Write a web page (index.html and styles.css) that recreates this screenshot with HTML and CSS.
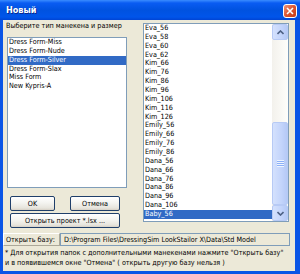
FILE: index.html
```
<!DOCTYPE html>
<html>
<head>
<meta charset="utf-8">
<title>Новый</title>
<link rel="stylesheet" href="styles.css">
</head>
<body>
<div class="window">
	<div class="titlebar">
		<span class="title">Новый</span>
		<span class="close"><svg width="8" height="8" viewBox="0 0 8 8"><path d="M1 1L7 7M7 1L1 7" stroke="#fff" stroke-width="1.6"/></svg></span>
	</div>
	<div class="client">
		<div class="top">
			<div class="left">
				<div class="caption">Выберите тип манекена и размер</div>
				<ul class="list models">
					<li>Dress Form-Miss</li>
					<li>Dress Form-Nude</li>
					<li class="sel">Dress Form-Silver</li>
					<li>Dress Form-Slax</li>
					<li>Miss Form</li>
					<li>New Kypris-A</li>
				</ul>
				<div class="buttons">
					<button class="btn ok">OK</button>
					<button class="btn cancel">Отмена</button>
				</div>
				<button class="btn open">Открыть проект *.lsx ...</button>
			</div>
			<div class="list sizes">
				<ul>
					<li>Eva_56</li>
					<li>Eva_58</li>
					<li>Eva_60</li>
					<li>Eva_62</li>
					<li>Kim_66</li>
					<li>Kim_76</li>
					<li>Kim_86</li>
					<li>Kim_96</li>
					<li>Kim_106</li>
					<li>Kim_116</li>
					<li>Kim_126</li>
					<li>Emily_56</li>
					<li>Emily_66</li>
					<li>Emily_76</li>
					<li>Emily_86</li>
					<li>Dana_56</li>
					<li>Dana_66</li>
					<li>Dana_76</li>
					<li>Dana_86</li>
					<li>Dana_96</li>
					<li>Dana_106</li>
					<li class="sel">Baby_56</li>
				</ul>
				<div class="scrollbar">
					<span class="sbtn"><svg width="7" height="5" viewBox="0 0 7 5"><path d="M0.5 4L3.5 1L6.5 4" fill="none" stroke="#4D6185" stroke-width="1.6"/></svg></span>
					<span class="thumb"><span class="grip"></span></span>
					<span class="sbtn"><svg width="7" height="5" viewBox="0 0 7 5"><path d="M0.5 1L3.5 4L6.5 1" fill="none" stroke="#4D6185" stroke-width="1.6"/></svg></span>
				</div>
			</div>
		</div>
		<div class="base">
			<span class="base-label">Открыть базу:</span>
			<span class="base-path">D:\Program Files\DressingSim LookStailor X\Data\Std Model</span>
		</div>
		<p class="note">* Для открытия папок с дополнительными манекенами нажмите "Открыть базу"<br>и в появившемся окне "Отмена" ( открыть другую базу нельзя )</p>
	</div>
</div>
</body>
</html>
```

FILE: styles.css
```
*
{
	box-sizing: border-box;
}

html, body
{
	margin: 0;
	padding: 0;
}

body
{
	font: 7.2px "DejaVu Sans Condensed", "DejaVu Sans", sans-serif;
	font-stretch: condensed;
	color: #000;
}

.window
{
	width: 300px;
	height: 274px;
	display: flex;
	flex-direction: column;
	background: #0A55E6;
}

.titlebar
{
	height: 20px;
	display: flex;
	align-items: center;
	justify-content: space-between;
	padding: 0 3px 0 6px;
	background: linear-gradient(#3A8CFF, #0A5CF2 15%, #0052E0 50%, #0055EA 85%, #0044D4);
}

.title
{
	color: #fff;
	font-weight: bold;
	font-size: 9px;
	text-shadow: 1px 1px 0 #0A2A90;
}

.close
{
	width: 14px;
	height: 14px;
	margin-top: 2px;
	display: flex;
	align-items: center;
	justify-content: center;
	border: 1px solid #fff;
	border-radius: 3px;
	background: linear-gradient(135deg, #F0957A, #DC5530 50%, #C43C16);
}

.client
{
	flex: 1;
	margin: 0 5px 3px 3px;
	background: #ECE9D8;
	display: flex;
	flex-direction: column;
}

.top
{
	display: flex;
}

.left
{
	width: 140px;
	padding: 1px 0 0 3px;
}

.caption
{
	height: 10px;
	line-height: 10px;
	white-space: nowrap;
}

.list
{
	background: #fff;
	border: 1px solid #7F9DB9;
}

ul
{
	list-style: none;
	margin: 0;
	padding: 0;
}

li
{
	height: 8.86px;
	line-height: 8.86px;
	padding-left: 1px;
	white-space: nowrap;
}

li.sel
{
	background: #316AC5;
	color: #fff;
}

.models
{
	width: 120px;
	height: 151px;
	margin: 6px 0 0 1px;
}

.buttons
{
	display: flex;
	gap: 15px;
	margin: 8px 0 0 4px;
}

.btn
{
	height: 15px;
	padding: 0;
	font: inherit;
	color: #000;
	border: 1px solid #1F3F6A;
	border-radius: 2px;
	background: linear-gradient(#fff, #F4F4F0 45%, #E6E4DC 85%, #D6D0C5);
}

.ok
{
	width: 45px;
}

.cancel
{
	width: 50px;
}

.open
{
	display: block;
	width: 110px;
	margin: 2px 0 0 4px;
}

.sizes
{
	width: 146px;
	height: 199px;
	margin-top: 3px;
	display: flex;
}

.sizes ul
{
	flex: 1;
}

.scrollbar
{
	width: 16px;
	display: flex;
	flex-direction: column;
	background: linear-gradient(90deg, #F3F1EC, #FEFEFB);
}

.sbtn, .thumb
{
	display: flex;
	align-items: center;
	justify-content: center;
	border: 1px solid #B7CAF5;
	border-radius: 2px;
	background: linear-gradient(90deg, #D4E1FD, #C3D4FB 60%, #B5C9F6);
}

.sbtn
{
	height: 16px;
}

.thumb
{
	height: 83px;
	margin-top: auto;
}

.grip
{
	width: 7px;
	height: 7px;
	background: repeating-linear-gradient(#EEF4FE 0 1px, #8CB0F8 1px 2px);
}

.base
{
	display: flex;
	height: 13px;
	margin-top: 5px;
}

.base-label
{
	width: 57px;
	padding-left: 2px;
	line-height: 11px;
	border: 1px solid;
	border-color: #fff #ACA899 #ACA899 #fff;
	white-space: nowrap;
}

.base-path
{
	width: 230px;
	padding-left: 3px;
	line-height: 11px;
	border: 1px solid #7F9DB9;
	white-space: nowrap;
	overflow: hidden;
}

.note
{
	margin: 2px 0 0 2px;
	line-height: 10px;
	white-space: nowrap;
}
```
